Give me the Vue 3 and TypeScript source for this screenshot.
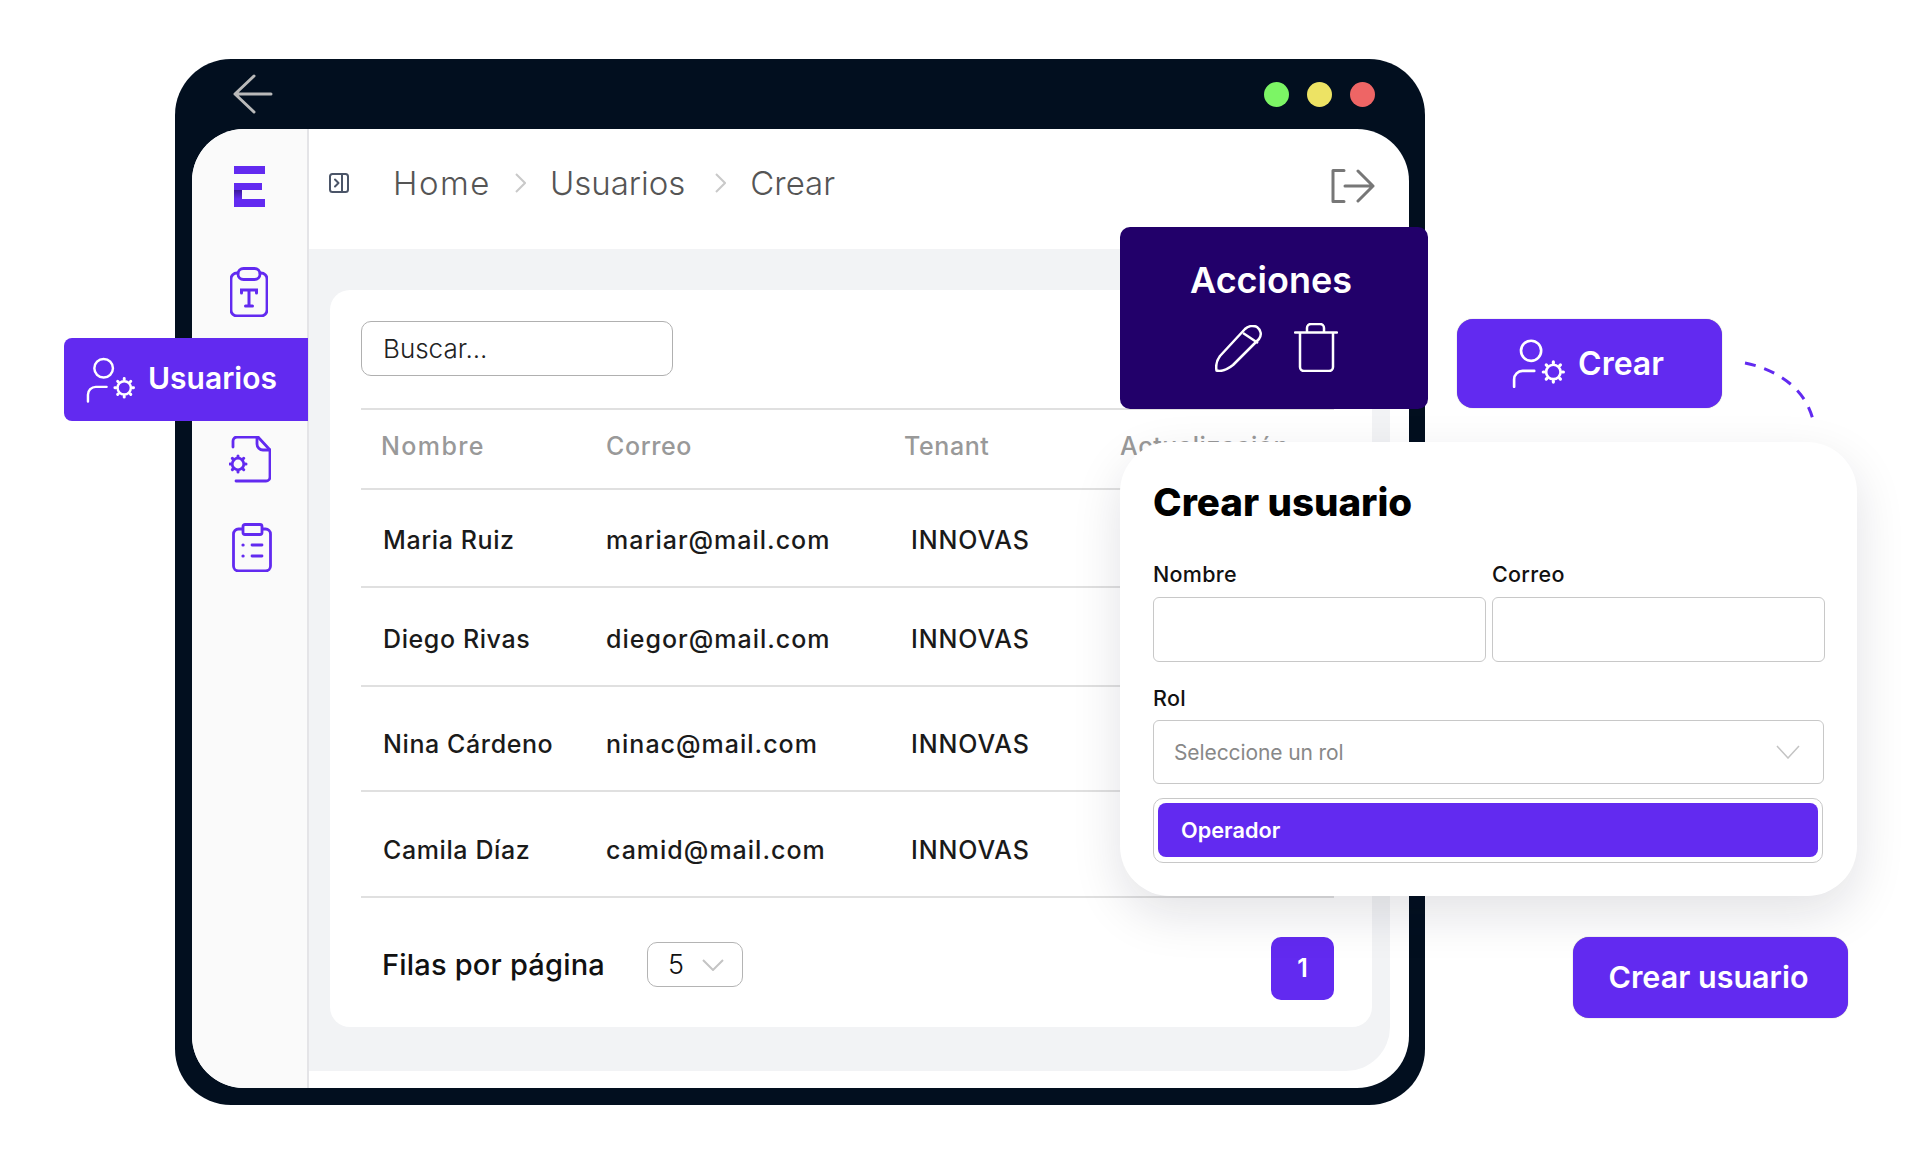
<template>
  <div class="page">
    <div class="device">
      <div class="device__bar">
        <svg class="back" viewBox="0 0 40 40" fill="none" stroke="#b9b9b9" stroke-width="3" stroke-linecap="round" stroke-linejoin="round">
          <path d="M21 2 2 20l19 18M2 20h36" />
        </svg>
        <div class="dots">
          <span class="dot dot--green"></span>
          <span class="dot dot--yellow"></span>
          <span class="dot dot--red"></span>
        </div>
      </div>

      <div class="screen">
        <aside class="sidebar">
          <svg class="logo" viewBox="0 0 31 41">
            <defs>
              <linearGradient id="stem" x1="0" y1="0" x2="0" y2="1">
                <stop offset="0" stop-color="#3a1899" />
                <stop offset="1" stop-color="#622af0" />
              </linearGradient>
            </defs>
            <path fill="#622af0" d="M0 0h31v8H0zM0 17h28v7H0zM0 33h31v8H0z" />
            <path fill="url(#stem)" d="M0 24h8v9H0z" />
          </svg>
          <svg class="side-icon side-icon--t" viewBox="0 0 38 50" fill="none" stroke="#622af0" stroke-width="2.800" stroke-linecap="round">
            <path d="M8 6H7a6 6 0 0 0-6 6v31a6 6 0 0 0 6 6h24a6 6 0 0 0 6-6V12a6 6 0 0 0-6-6h-1" />
            <rect x="8" y="1.500" width="22" height="11" rx="5.5" />
            <path stroke-width="3" d="M11.5 26v-3h15v3M19 23v16M15.5 39h7" />
          </svg>
          <svg class="side-icon side-icon--file" viewBox="0 0 42 47" fill="none" stroke="#622af0" stroke-width="2.800" stroke-linecap="round" stroke-linejoin="round">
            <path d="M4 11V5a4 4 0 0 1 4-4h21l12 13v27a4 4 0 0 1-4 4H7" />
            <path d="M28 2v6a6 6 0 0 0 6 6h7" />
            <circle cx="9" cy="28" r="5.800" />
            <path stroke-width="3" d="M9 20v1M9 35v1M1 28h1M16 28h1M3.400 22.400l.7.7M14 33l.7.7M3.400 33.600l.7-.7M14 23l.7-.7" />
          </svg>
          <svg class="side-icon side-icon--list" viewBox="0 0 40 49" fill="none" stroke="#622af0" stroke-width="2.800" stroke-linecap="round">
            <rect x="1.500" y="6" width="37" height="42" rx="5" />
            <rect x="11" y="1.500" width="19" height="10" rx="2" fill="#fafafa" />
            <path d="M20 22h10M20 33h10" />
            <path stroke-width="3.200" d="M11 22h.1M11 33h.1" />
          </svg>
        </aside>

        <div class="content">
          <header class="topbar">
            <svg class="toggle" viewBox="0 0 20 20" fill="none" stroke="#4b5568" stroke-width="2" stroke-linecap="round" stroke-linejoin="round">
              <rect x="1" y="1" width="18" height="18" rx="2.500" />
              <path d="M13 1v18M6 6.500l3.500 3.500L6 13.500" />
            </svg>
            <nav class="crumbs">
              <span class="crumb-home">Home</span>
              <svg class="crumb-sep" viewBox="0 0 11 20" fill="none" stroke="#c9c9c9" stroke-width="2"><path d="m1 1 9 9-9 9" /></svg>
              <span>Usuarios</span>
              <svg class="crumb-sep crumb-sep--last" viewBox="0 0 11 20" fill="none" stroke="#c9c9c9" stroke-width="2"><path d="m1 1 9 9-9 9" /></svg>
              <span>Crear</span>
            </nav>
            <svg class="logout" viewBox="0 0 44 34" fill="none" stroke="#777" stroke-width="3" stroke-linecap="round" stroke-linejoin="round">
              <path d="M13 1.500H2v31h11M14 17h28M27 2l15 15-15 15" />
            </svg>
          </header>

          <main class="main">
            <section class="card">
              <div class="search">Buscar...</div>
              <div class="table">
                <div class="row row--head">
                  <span class="cell-name">Nombre</span>
                  <span>Correo</span>
                  <span>Tenant</span>
                  <span>Actualización</span>
                </div>
                <div v-for="u in users" :key="u.mail" class="row" :style="{ height: u.h + 'px' }">
                  <span class="cell-user">{{ u.name }}</span>
                  <span class="cell-mail">{{ u.mail }}</span>
                  <span class="cell-tenant">INNOVAS</span>
                </div>
              </div>
              <footer class="pager">
                <span class="pager__label">Filas por página</span>
                <div class="pager__select">
                  <span>5</span>
                  <svg viewBox="0 0 22 12" fill="none" stroke="#c4c4c4" stroke-width="2"><path d="m1 1 10 10L21 1" /></svg>
                </div>
                <button class="pager__page">1</button>
              </footer>
            </section>
          </main>
        </div>
      </div>
    </div>

    <!-- floating pieces over the window -->
    <div class="pill">
      <svg class="user-gear" viewBox="0 0 50 46" fill="none" stroke="#fff" stroke-width="2.500" stroke-linecap="round">
        <circle cx="18" cy="11" r="9.500" />
        <path d="M2 45v-7a8 8 0 0 1 8-8h11" />
        <circle cx="39" cy="31" r="6.800" />
        <path stroke-width="3" d="M39 21.500v1M39 39.500v1M29.500 31h1M47.500 31h1M32.300 24.300l.7.7M45 37l.7.7M32.300 37.700l.7-.7M45 25l.7-.7" />
      </svg>
      <span>Usuarios</span>
    </div>

    <div class="actions">
      <h3>Acciones</h3>
      <div class="actions__icons">
        <svg class="pencil" viewBox="0 0 47 47" fill="none" stroke="#fff" stroke-width="2.500" stroke-linejoin="round">
          <path d="M1.500 45.500C.5 40 2 35 5 31L30 4c3-3 8-4 12-2 4 3 5 8 2 12L18 40c-5 4-11 7-16.500 5.500Z" />
          <path d="m28 8 15 10" />
        </svg>
        <svg class="trash" viewBox="0 0 44 49" fill="none" stroke="#fff" stroke-width="2.500" stroke-linecap="round" stroke-linejoin="round">
          <path d="M1 9.500h42M6 9.500V44a4 4 0 0 0 4 4h25a4 4 0 0 0 4-4V9.500M13 9V5a4 4 0 0 1 4-4h9a4 4 0 0 1 4 4v4" />
        </svg>
      </div>
    </div>

    <button class="btn btn--create">
      <svg class="user-gear user-gear--lg" viewBox="0 0 50 46" fill="none" stroke="#fff" stroke-width="2.500" stroke-linecap="round">
        <circle cx="18" cy="11" r="9.500" />
        <path d="M2 45v-7a8 8 0 0 1 8-8h11" />
        <circle cx="39" cy="31" r="6.800" />
        <path stroke-width="3" d="M39 21.500v1M39 39.500v1M29.500 31h1M47.500 31h1M32.300 24.300l.7.7M45 37l.7.7M32.300 37.700l.7-.7M45 25l.7-.7" />
      </svg>
      Crear
    </button>

    <svg class="dash" viewBox="0 0 70 60" fill="none" stroke="#622af0" stroke-width="3">
      <path stroke-dasharray="11 9" d="M1 2c30 6 60 24 68 57" />
    </svg>

    <div class="modal">
      <h2>Crear usuario</h2>
      <div class="modal__fields">
        <label class="field">
          <span>Nombre</span>
          <div class="input"></div>
        </label>
        <label class="field">
          <span>Correo</span>
          <div class="input"></div>
        </label>
      </div>
      <div class="field field--rol">
        <span>Rol</span>
        <div class="select">
          <span>Seleccione un rol</span>
          <svg viewBox="0 0 24 14" fill="none" stroke="#c4c4c4" stroke-width="1.500"><path d="m1 1 11 12L23 1" /></svg>
        </div>
      </div>
      <div class="options">
        <div class="option">Operador</div>
      </div>
    </div>

    <button class="btn btn--submit">Crear usuario</button>
  </div>
</template>

<script setup lang="ts">
interface User {
  name: string
  mail: string
  h: number
}

const users: User[] = [
  { name: 'Maria Ruiz', mail: 'mariar@mail.com', h: 98 },
  { name: 'Diego Rivas', mail: 'diegor@mail.com', h: 99 },
  { name: 'Nina Cárdeno', mail: 'ninac@mail.com', h: 105 },
  { name: 'Camila Díaz', mail: 'camid@mail.com', h: 106 }
]
</script>

<style>
body {
  background: #fff;
}
</style>

<style scoped>
.page {
  position: relative;
  width: 1920px;
  height: 1168px;
  padding: 59px 0 0 175px;
  box-sizing: border-box;
  overflow: hidden;
  background: #fff;
  font-family: Inter, "Liberation Sans", sans-serif;
  color: #111;
}

.device {
  display: flex;
  flex-direction: column;
  width: 1250px;
  height: 1046px;
  padding: 0 16px 17px 17px;
  box-sizing: border-box;
  background: #020f1f;
  border-radius: 56px;
}
.device__bar {
  display: flex;
  align-items: center;
  justify-content: space-between;
  height: 70px;
  padding: 0 34px 0 41px;
  flex: none;
}
.back {
  width: 40px;
  height: 40px;
}
.dots {
  display: flex;
  gap: 18px;
}
.dot {
  width: 25px;
  height: 25px;
  border-radius: 50%;
}
.dot--green { background: #7cf565; }
.dot--yellow { background: #ede364; }
.dot--red { background: #ee6565; }

.screen {
  display: flex;
  flex: 1;
  min-height: 0;
  overflow: hidden;
  background: #fff;
  border-radius: 52px;
}

.sidebar {
  display: flex;
  flex-direction: column;
  flex: none;
  width: 117px;
  padding-top: 37px;
  box-sizing: border-box;
  background: #fafafa;
  border-right: 2px solid #e4e4e7;
}
.logo {
  width: 31px;
  height: 41px;
  margin-left: 42px;
}
.side-icon { display: block; }
.side-icon--t {
  width: 38px;
  height: 50px;
  margin: 60px 0 0 38px;
}
.side-icon--file {
  width: 42px;
  height: 47px;
  margin: 119px 0 0 37px;
}
.side-icon--list {
  width: 40px;
  height: 49px;
  margin: 40px 0 0 40px;
}

.content {
  display: flex;
  flex-direction: column;
  flex: 1;
  min-width: 0;
}
.topbar {
  display: flex;
  align-items: center;
  flex: none;
  height: 120px;
  padding: 0 34px 13px 20px;
  box-sizing: border-box;
}
.toggle {
  width: 20px;
  height: 20px;
}
.crumbs {
  display: flex;
  align-items: center;
  margin-left: 44px;
  font-size: 33px;
  font-weight: 300;
  color: #555;
}
.crumb-home { letter-spacing: 1.500px; }
.crumb-sep {
  width: 11px;
  height: 20px;
  margin: 0 24px;
}
.crumb-sep--last { margin-left: 30px; }
.logout {
  width: 44px;
  height: 34px;
  margin: 7px 0 0 auto;
}

.main {
  flex: 1;
  min-height: 0;
  margin: 0 19px 17px 0;
  padding: 41px 18px 44px 21px;
  background: #f2f3f5;
  border-bottom-right-radius: 44px;
}
.card {
  display: flex;
  flex-direction: column;
  height: 100%;
  padding: 31px 38px 0 31px;
  box-sizing: border-box;
  background: #fff;
  border-radius: 20px;
}
.search {
  display: flex;
  align-items: center;
  flex: none;
  width: 312px;
  height: 55px;
  padding-left: 21px;
  box-sizing: border-box;
  border: 1.500px solid #b0b0b0;
  border-radius: 10px;
  font-size: 26px;
  font-weight: 300;
  color: #222;
}

.table {
  margin-top: 32px;
  border-top: 2px solid #e0e0e0;
}
.row {
  display: grid;
  grid-template-columns: 245px 298px 216px 1fr;
  align-items: end;
  padding-bottom: 31px;
  box-sizing: border-box;
  border-bottom: 2px solid #e0e0e0;
  font-size: 25px;
  line-height: 30px;
  font-weight: 500;
  letter-spacing: .6px;
  color: #1a1a1a;
}
.row--head {
  height: 80px;
  padding-bottom: 27px;
  color: #999;
}
.cell-name {
  padding-left: 20px;
  letter-spacing: 1.400px;
}
.cell-user { padding-left: 22px; }
.cell-mail { letter-spacing: 1px; }
.cell-tenant {
  padding-left: 7px;
  letter-spacing: .9px;
}

.pager {
  display: flex;
  align-items: center;
  flex: 1;
  padding: 4px 0 0 21px;
}
.pager__label {
  font-size: 29px;
  font-weight: 500;
  letter-spacing: .2px;
  color: #111;
}
.pager__select {
  display: flex;
  align-items: center;
  justify-content: space-between;
  width: 96px;
  height: 45px;
  margin-left: 42px;
  padding: 0 18px 0 20px;
  box-sizing: border-box;
  border: 1.500px solid #b4b4b4;
  border-radius: 10px;
  font-size: 27px;
  font-weight: 300;
}
.pager__select svg {
  width: 22px;
  height: 12px;
}
.pager__page {
  width: 63px;
  height: 63px;
  margin: 7px 0 0 auto;
  border: 0;
  border-radius: 10px;
  background: #622af0;
  color: #fff;
  font: 600 25px Inter, sans-serif;
}

.pill {
  position: absolute;
  left: 64px;
  top: 338px;
  display: flex;
  align-items: center;
  gap: 13px;
  width: 244px;
  height: 83px;
  padding-left: 22px;
  box-sizing: border-box;
  background: #622af0;
  border-radius: 8px 0 0 8px;
  color: #fff;
  font-size: 30px;
  font-weight: 600;
}
.pill span {
  margin-bottom: 3px;
}
.user-gear {
  width: 49px;
  height: 46px;
  flex: none;
}
.user-gear--lg {
  width: 53px;
  height: 49px;
}

.actions {
  position: absolute;
  left: 1120px;
  top: 227px;
  width: 308px;
  height: 182px;
  padding-top: 31px;
  box-sizing: border-box;
  background: #22006a;
  border-radius: 10px;
  color: #fff;
  text-align: center;
}
.actions h3 {
  margin: 0;
  padding-right: 6px;
  font-size: 36px;
  font-weight: 600;
  line-height: 44px;
}
.actions__icons {
  display: flex;
  justify-content: center;
  align-items: flex-end;
  gap: 32px;
  margin-top: 21px;
  padding-left: 5px;
}
.pencil {
  width: 47px;
  height: 47px;
}
.trash {
  width: 44px;
  height: 49px;
}

.btn {
  position: absolute;
  display: flex;
  align-items: center;
  justify-content: center;
  border: 0;
  border-radius: 16px;
  background: #622af0;
  box-shadow: 0 0 1px #888;
  color: #fff;
  font-family: Inter, "Liberation Sans", sans-serif;
  font-weight: 600;
}
.btn--create {
  left: 1457px;
  top: 319px;
  width: 265px;
  height: 89px;
  gap: 13px;
  padding: 0 3px 0 0;
  font-size: 32px;
}
.btn--submit {
  left: 1573px;
  top: 937px;
  width: 275px;
  height: 81px;
  padding: 0 4px 3px 0;
  font-size: 30.500px;
}

.dash {
  position: absolute;
  left: 1744px;
  top: 361px;
  width: 70px;
  height: 60px;
}

.modal {
  position: absolute;
  left: 1120px;
  top: 442px;
  width: 737px;
  height: 454px;
  padding: 33px 33px 0;
  box-sizing: border-box;
  background: #fff;
  border-radius: 50px;
  box-shadow: 0 18px 50px rgba(20, 20, 40, .12);
}
.modal h2 {
  margin: 0;
  font-size: 38.500px;
  font-weight: 800;
  line-height: 54px;
  color: #000;
}
.modal__fields {
  display: grid;
  grid-template-columns: 333px 333px;
  gap: 6px;
  margin-top: 30px;
}
.field {
  display: block;
  font-size: 21.500px;
  font-weight: 500;
  letter-spacing: .3px;
  color: #111;
}
.field > span {
  display: block;
  line-height: 30px;
}
.field--rol {
  margin-top: 21px;
}
.input {
  height: 65px;
  margin-top: 8px;
  border: 1.500px solid #c8c8c8;
  border-radius: 6px;
  box-sizing: border-box;
}
.select {
  display: flex;
  align-items: center;
  justify-content: space-between;
  height: 64px;
  margin-top: 7px;
  padding: 0 23px 0 20px;
  box-sizing: border-box;
  border: 1.500px solid #c8c8c8;
  border-radius: 6px;
}
.select span {
  font-size: 21px;
  font-weight: 400;
  letter-spacing: -.1px;
  color: #888;
}
.select svg {
  width: 24px;
  height: 14px;
}
.options {
  width: 670px;
  height: 65px;
  margin-top: 14px;
  padding: 4px;
  box-sizing: border-box;
  border: 1.500px solid #c8c8c8;
  border-radius: 10px;
}
.option {
  display: flex;
  align-items: center;
  height: 54px;
  padding-left: 23px;
  background: #622af0;
  border-radius: 8px;
  color: #fff;
  font-size: 21.700px;
  font-weight: 600;
}
</style>
